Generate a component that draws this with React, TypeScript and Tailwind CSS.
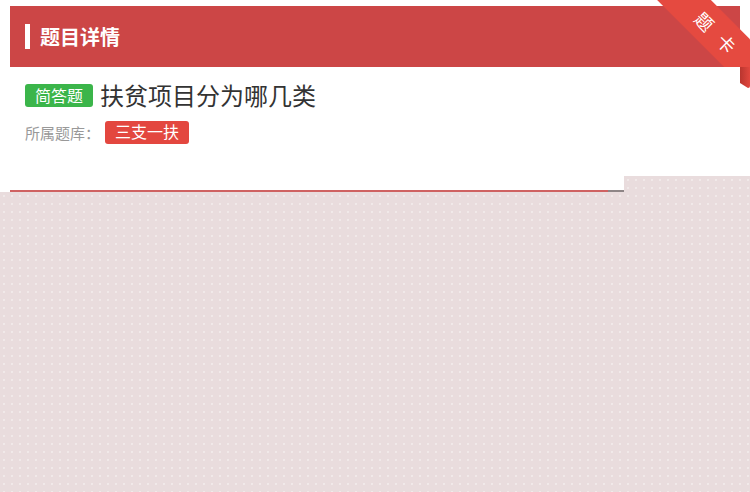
import React from "react";

export default function App() {
  const cjk = { fontFamily: '"Noto Sans CJK SC", "Noto Sans", sans-serif' };
  return (
    <div
      className="relative w-[750px] h-[492px] overflow-hidden bg-[#e9dcdd] bg-[radial-gradient(circle,#f1e9e9_0.7px,transparent_0.9px)] bg-[length:8px_8px] flex flex-col"
      style={cjk}
    >
      <div className="bg-white h-[176px] pt-[6px] px-[10px] flex flex-col">
        <div className="h-[61px] bg-[#cc4646] flex items-center pl-[15px]">
          <div className="w-[5px] h-[25px] bg-white mr-[10px]" />
          <span className="text-white text-[20px] font-bold leading-none">题目详情</span>
        </div>
        <div className="pl-[15px] pt-[16px] flex flex-col">
          <div className="flex items-center h-[24px]">
            <span className="h-[23px] px-[10px] rounded-[3px] bg-[#3bb54a] text-white text-[16px] leading-[23px]">
              简答题
            </span>
            <span className="ml-[7px] text-[24px] leading-none text-[#333333]">扶贫项目分为哪几类</span>
          </div>
          <div className="flex items-center mt-[14px] h-[23px]">
            <span className="text-[15px] text-[#999999] leading-none">所属题库：</span>
            <span className="ml-[5px] h-[23px] px-[10px] rounded-[3px] bg-[#e3473f] text-white text-[16px] leading-[20px]">
              三支一扶
            </span>
          </div>
        </div>
      </div>
      <div className="w-[624px] h-[16px] bg-white flex items-end pl-[10px]">
        <div className="flex-1 h-[2px] flex">
          <div className="flex-1 bg-[#cf6262]" />
          <div className="w-[16px] bg-[#8e8586]" />
        </div>
      </div>

      {/* ribbon */}
      <div className="absolute right-0 top-0 w-[93px] h-[67px] overflow-hidden">
        <div className="absolute left-[-21.5px] top-[12.5px] w-[160px] h-[38px] rotate-45 bg-[#e54a40] flex items-center justify-center">
          <span className="text-white text-[18px] leading-none tracking-[13px] pl-[13px] whitespace-nowrap">题卡</span>
        </div>
      </div>
      <svg className="absolute left-[740px] top-[67px]" width="10" height="21" viewBox="0 0 10 21">
        <defs>
          <linearGradient id="fold" x1="0" y1="0" x2="1" y2="0">
            <stop offset="0" stopColor="#b9362f" />
            <stop offset="1" stopColor="#e2473e" />
          </linearGradient>
        </defs>
        <path d="M0 0 H10 V19 Q10 21 8 21 L0 16 Z" fill="url(#fold)" />
      </svg>
    </div>
  );
}
